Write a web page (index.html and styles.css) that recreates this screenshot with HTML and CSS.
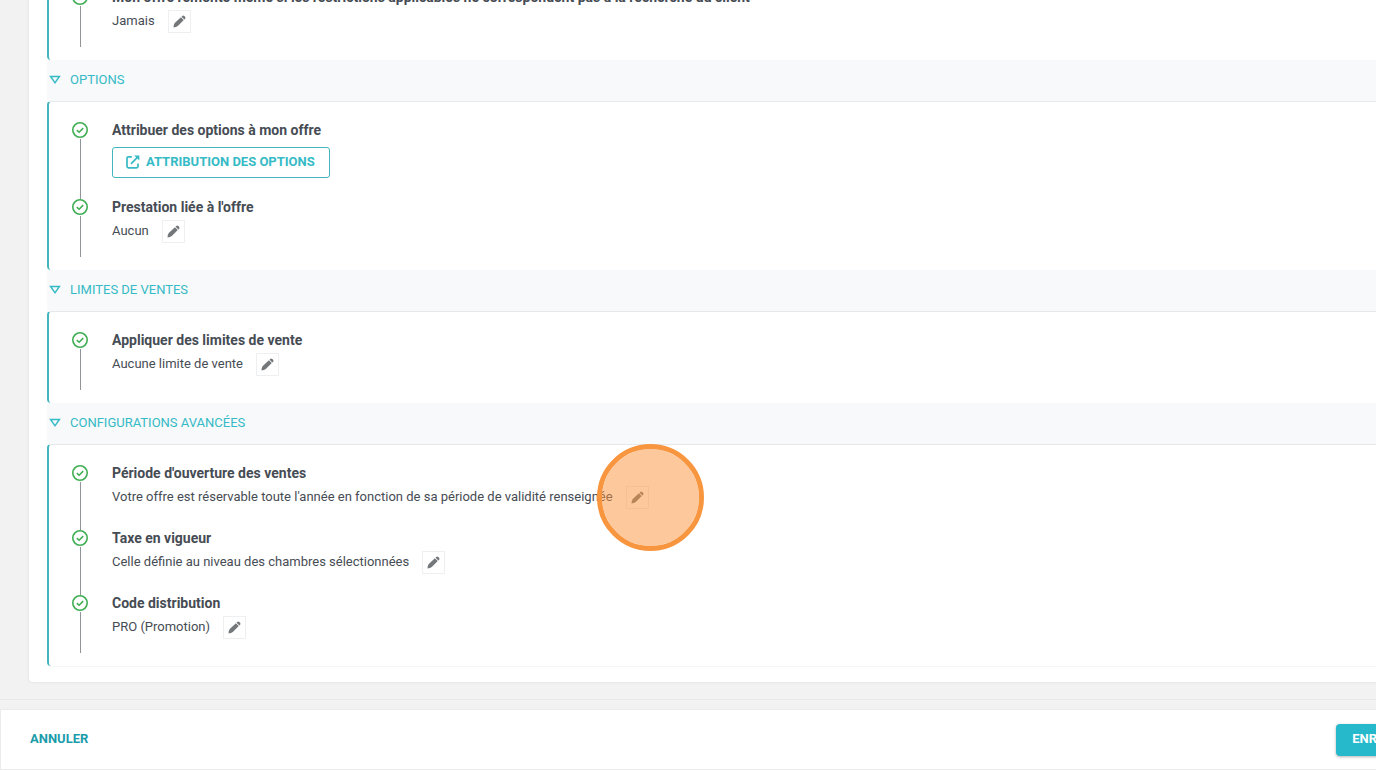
FILE: index.html
```html
<!DOCTYPE html>
<html lang="fr">
<head>
    <meta charset="UTF-8">
    <meta name="viewport" content="width=device-width, initial-scale=1.0">
    <title>Configuration de l'offre</title>
    <link rel="stylesheet" href="styles.css">
</head>
<body>
    <svg class="sprite" aria-hidden="true">
        <symbol id="check" viewBox="0 0 16 16">
            <circle cx="8" cy="8" r="7.2" fill="none" stroke="#3fae52" stroke-width="1.6"/>
            <path d="M4.8 8.1l2.3 2.1 4.1-4.1" fill="none" stroke="#3fae52" stroke-width="1.5"/>
        </symbol>
        <symbol id="pencil" viewBox="0 0 14 14">
            <path d="M.6 13.4q-.2-3 1.3-4.7L8.5 2.5l3.1 3-6.4 6.4q-1.800 1.400-4.600 1.500zM9.200 1.800l.7-.7q1.200-1.000 2.300 0l.8.8q1 1.200 0 2.300l-.7.7z" fill="#74777a"/>
        </symbol>
        <symbol id="triangle" viewBox="0 0 12 10">
            <path d="M1.6 1.4h8.8L6 7.8z" fill="none" stroke="#35bac6" stroke-width="1.5"/>
        </symbol>
        <symbol id="external" viewBox="0 0 14 14">
            <path d="M5.8 1.8H2.6Q1 1.8 1 3.4v7.8q0 1.6 1.6 1.6h7.8q1.6 0 1.6-1.6V8.4M5 8.8L11.6 2.2" fill="none" stroke="#35bac6" stroke-width="1.7"/>
            <path d="M8.2.4h5.2v5.2z" fill="#35bac6"/>
        </symbol>
    </svg>

    <div class="page">
        <main class="content">
            <div class="card">
                <section>
                    <div class="steps">
                        <div class="step">
                            <div class="marker"><svg><use href="#check"/></svg></div>
                            <div>
                                <h3>Mon offre remonte même si les restrictions applicables ne correspondent pas à la recherche du client</h3>
                                <div class="value">Jamais <button class="edit" aria-label="Modifier"><svg><use href="#pencil"/></svg></button></div>
                            </div>
                        </div>
                    </div>
                </section>

                <section>
                    <h2><svg><use href="#triangle"/></svg>OPTIONS</h2>
                    <div class="steps">
                        <div class="step">
                            <div class="marker"><svg><use href="#check"/></svg></div>
                            <div>
                                <h3>Attribuer des options à mon offre</h3>
                                <button class="btn-outline"><svg><use href="#external"/></svg>ATTRIBUTION DES OPTIONS</button>
                            </div>
                        </div>
                        <div class="step">
                            <div class="marker"><svg><use href="#check"/></svg></div>
                            <div>
                                <h3>Prestation liée à l'offre</h3>
                                <div class="value">Aucun <button class="edit" aria-label="Modifier"><svg><use href="#pencil"/></svg></button></div>
                            </div>
                        </div>
                    </div>
                </section>

                <section>
                    <h2><svg><use href="#triangle"/></svg>LIMITES DE VENTES</h2>
                    <div class="steps">
                        <div class="step">
                            <div class="marker"><svg><use href="#check"/></svg></div>
                            <div>
                                <h3>Appliquer des limites de vente</h3>
                                <div class="value">Aucune limite de vente <button class="edit" aria-label="Modifier"><svg><use href="#pencil"/></svg></button></div>
                            </div>
                        </div>
                    </div>
                </section>

                <section>
                    <h2><svg><use href="#triangle"/></svg>CONFIGURATIONS AVANCÉES</h2>
                    <div class="steps last">
                        <div class="step">
                            <div class="marker"><svg><use href="#check"/></svg></div>
                            <div>
                                <h3>Période d'ouverture des ventes</h3>
                                <div class="value">Votre offre est réservable toute l'année en fonction de sa période de validité renseignée
                                    <button class="edit" aria-label="Modifier"><svg><use href="#pencil"/></svg><span class="highlight"></span></button>
                                </div>
                            </div>
                        </div>
                        <div class="step">
                            <div class="marker"><svg><use href="#check"/></svg></div>
                            <div>
                                <h3>Taxe en vigueur</h3>
                                <div class="value">Celle définie au niveau des chambres sélectionnées <button class="edit" aria-label="Modifier"><svg><use href="#pencil"/></svg></button></div>
                            </div>
                        </div>
                        <div class="step">
                            <div class="marker"><svg><use href="#check"/></svg></div>
                            <div>
                                <h3>Code distribution</h3>
                                <div class="value">PRO (Promotion) <button class="edit" aria-label="Modifier"><svg><use href="#pencil"/></svg></button></div>
                            </div>
                        </div>
                    </div>
                </section>
            </div>
        </main>

        <div class="divider"></div>

        <footer>
            <button class="btn-text">ANNULER</button>
            <button class="btn-primary">ENREGISTRER</button>
        </footer>
    </div>
</body>
</html>
```

FILE: styles.css
```css
* {
    box-sizing: border-box;
}
body {
    margin: 0;
    background-color: #f2f2f2;
    font-family: Roboto, Arial, sans-serif;
    font-size: 13px;
    color: #464c54;
    overflow: hidden;
}
h2, h3 {
    margin: 0;
}
button {
    font-family: inherit;
    font-size: 13px;
    cursor: pointer;
}
.sprite {
    display: none;
}
/* the form is wider than the window, its right side runs out of view */
.page {
    width: calc(100% + 94px);
    height: 100vh;
    display: flex;
    flex-direction: column;
}
.content {
    flex: 1;
    min-height: 0;
    display: flex;
    flex-direction: column;
    justify-content: flex-end;
    padding: 0 18px 17px 29px;
    overflow: hidden;
}
.card {
    flex-shrink: 0;
    background-color: white;
    padding: 0 18px 16px;
    border-radius: 4px;
    box-shadow: 0 0 3px rgba(0,0,0,0.1);
}
h2 {
    display: flex;
    align-items: center;
    gap: 9px;
    height: 41px;
    padding: 0 2px 2px;
    background-color: #f7f9fb;
    color: #35bac6;
    font-size: 13px;
    font-weight: 400;
}
h2 svg {
    width: 12px;
    height: 10px;
}
.steps {
    padding: 20px 0 7px 23px;
    border-top: 1px solid #e6e9ec;
    border-left: 2px solid #45b5bd;
    border-radius: 4px 0 0 4px;
}
.steps.last {
    box-shadow: 0 1px 0 #f5f5f5;
}
.step {
    display: flex;
    gap: 24px;
}
.step:not(:last-child) {
    padding-bottom: 7px;
}
.step:last-child {
    padding-bottom: 6px;
}
.marker {
    display: flex;
    flex-direction: column;
}
.marker svg {
    width: 16px;
    height: 16px;
}
.marker::after {
    content: "";
    flex: 1;
    width: 1px;
    margin: 1px 0 0 8px;
    background-color: #929598;
}
.step:not(:last-child) .marker::after {
    margin-bottom: -7px;
}
h3 {
    font-size: 14px;
    font-weight: 700;
    line-height: 16px;
}
.value {
    display: flex;
    gap: 13px;
    height: 23px;
    margin: 5px 0 14px;
    line-height: 22px;
}
.edit {
    position: relative;
    display: flex;
    align-items: center;
    justify-content: center;
    width: 23px;
    height: 23px;
    padding: 0;
    background-color: white;
    border: 1px solid #eeeff0;
}
.edit svg {
    width: 13px;
    height: 13px;
}
.highlight {
    position: absolute;
    left: -30px;
    top: -43px;
    width: 107px;
    height: 107px;
    border: 5px solid #f8953f;
    border-radius: 50%;
    background-color: rgba(251,145,57,0.5);
    background-clip: padding-box;
}
.btn-outline {
    display: flex;
    align-items: center;
    gap: 6px;
    height: 31px;
    margin: 9px 0 14px;
    padding: 0 14px 2px 13px;
    background-color: white;
    border: 1px solid #45b5bd;
    border-radius: 3px;
    color: #35bac6;
    font-weight: 700;
}
.btn-outline svg {
    width: 14px;
    height: 14px;
}
.divider {
    height: 10px;
    border-top: 1px solid #e9e9e9;
}
footer {
    display: flex;
    align-items: center;
    justify-content: space-between;
    height: 61px;
    padding: 0 16px 0 14px;
    background-color: white;
    border: 1px solid #ebebeb;
}
.btn-text {
    height: 32px;
    padding: 0 15px 2px;
    background: none;
    border: none;
    color: #1b9cab;
    font-weight: 700;
}
.btn-primary {
    height: 32px;
    padding: 0 16px 2px;
    background-color: #25b9cb;
    border: none;
    border-radius: 4px;
    box-shadow: 0 1px 3px rgba(0,0,0,0.3);
    color: white;
    font-weight: 700;
}
```
